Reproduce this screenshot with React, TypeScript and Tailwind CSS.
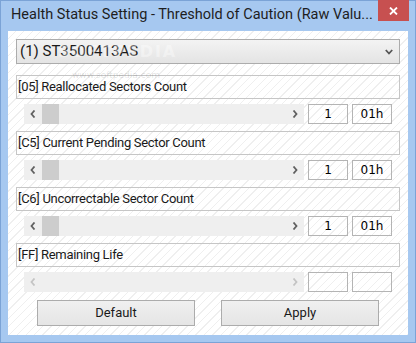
import React from "react";

const hatch =
  "bg-[repeating-linear-gradient(135deg,#ffffff_0px,#ffffff_5px,#efefef_5px,#efefef_6px)]";

function Chevron({ dir, disabled }: { dir: "l" | "r"; disabled?: boolean }) {
  const c = disabled ? "#c4c4c4" : "#606060";
  return (
    <svg width="6" height="8" viewBox="0 0 6 8">
      {dir === "l" ? (
        <path d="M4.5 0.5 L1.5 4 L4.5 7.5" stroke={c} strokeWidth="1.8" fill="none" />
      ) : (
        <path d="M1.5 0.5 L4.5 4 L1.5 7.5" stroke={c} strokeWidth="1.8" fill="none" />
      )}
    </svg>
  );
}

function Group({
  label,
  disabled,
  last,
}: {
  label: string;
  disabled?: boolean;
  last?: boolean;
}) {
  return (
    <div className={last ? "" : "mb-[7px]"}>
      <div className="h-[24px] border border-[#c6c6c6] flex items-center pl-[1px] text-[13px] tracking-[-0.3px] text-[#1a1a1a]">
        {label}
      </div>
      <div className="mt-[5px] ml-[8px] flex h-[20px] gap-[4px]">
        <div className="w-[280px] h-[20px] bg-[#efefef] flex items-center">
          <div className="w-[18px] h-full flex items-center justify-center">
            <Chevron dir="l" disabled={disabled} />
          </div>
          {!disabled && <div className="w-[17px] h-full bg-[#cdcdcd]" />}
          <div className="flex-1" />
          <div className="w-[18px] h-full flex items-center justify-center">
            <Chevron dir="r" disabled={disabled} />
          </div>
        </div>
        <div className="w-[40px] h-[20px] border border-[#b4b4b4] flex items-center justify-center font-['DejaVu_Sans',sans-serif] text-[12px] text-black">
          {disabled ? "" : "1"}
        </div>
        <div className="w-[40px] h-[20px] border border-[#b4b4b4] flex items-center justify-center font-['DejaVu_Sans',sans-serif] text-[12px] text-black">
          {disabled ? "" : "01h"}
        </div>
      </div>
    </div>
  );
}

export default function App() {
  return (
    <div className="relative w-[416px] h-[343px] bg-[#a6c8f0] border border-[#7ba3d6] flex flex-col font-['Roboto',sans-serif]">
      <div className="h-[30px] flex items-center pl-[10px] pb-[2px] text-[14.5px] text-[#1e1e1e] whitespace-nowrap">
        Health Status Setting - Threshold of Caution (Raw Valu...
      </div>
      <div className="absolute left-[377px] top-[-1px] w-[31px] h-[21px] bg-[#c75050] flex items-center justify-center">
        <svg width="9" height="8" viewBox="0 0 9 8">
          <path d="M1 0.5 L8 7.5 M8 0.5 L1 7.5" stroke="#ffffff" strokeWidth="1.8" />
        </svg>
      </div>
      <div className={`relative mx-[7px] h-[304px] ${hatch} px-[8px] pt-[8px] flex flex-col`}>
        <div className="h-[25px] border border-[#acacac] bg-gradient-to-b from-[#f3f3f3] to-[#e4e4e4] flex items-center justify-between pl-[3px] pr-[6px] text-[15px] text-[#1a1a1a]">
          <span>(1) ST3500413AS</span>
          <svg width="8" height="6" viewBox="0 0 8 6">
            <path d="M0.8 1 L4 4.5 L7.2 1" stroke="#555555" strokeWidth="1.8" fill="none" />
          </svg>
        </div>
        <div className="mt-[11px]">
          <Group label="[05] Reallocated Sectors Count" />
          <Group label="[C5] Current Pending Sector Count" />
          <Group label="[C6] Uncorrectable Sector Count" />
          <Group label="[FF] Remaining Life" disabled last />
        </div>
        <div className="mt-[8px] flex justify-between px-[21px]">
          <div className="w-[158px] h-[26px] border border-[#acacac] bg-gradient-to-b from-[#f0f0f0] to-[#e5e5e5] flex items-center justify-center text-[13px] text-[#1a1a1a]">
            Default
          </div>
          <div className="w-[158px] h-[26px] border border-[#acacac] bg-gradient-to-b from-[#f0f0f0] to-[#e5e5e5] flex items-center justify-center text-[13px] text-[#1a1a1a]">
            Apply
          </div>
        </div>
        <div className="pointer-events-none absolute left-[50px] top-[13px] leading-none text-[16px] font-bold tracking-[2px] text-white/40 font-['DejaVu_Sans',sans-serif]">
          SOFTPEDIA
        </div>
        <div className="pointer-events-none absolute left-[64px] top-[40px] leading-none text-[9px] text-[#000000]/[0.12] font-['DejaVu_Sans',sans-serif]">
          www.softpedia.com
        </div>
      </div>
    </div>
  );
}
